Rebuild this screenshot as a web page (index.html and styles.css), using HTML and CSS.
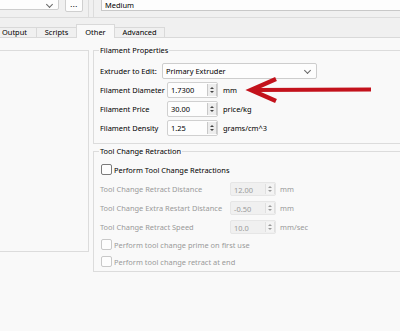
FILE: index.html
```html
<!DOCTYPE html>
<html lang="en">
<head>
<meta charset="UTF-8">
<title>Other settings</title>
<link rel="stylesheet" href="styles.css">
</head>
<body>

<div class="top">
    <div class="top-left">
        <div class="combo top-combo"><span class="chev"></span></div>
        <div class="dots">...</div>
    </div>
    <div class="top-right">
        <div class="line-edit">Medium</div>
    </div>
</div>

<div class="tabbar">
    <div class="tab first">Output</div>
    <div class="tab">Scripts</div>
    <div class="tab active">Other</div>
    <div class="tab">Advanced</div>
</div>

<div class="content">
    <div class="side-box"></div>

    <div class="groups">
        <div class="group filament">
            <div class="group-title">Filament Properties</div>
            <div class="row">
                <span class="label">Extruder to Edit:</span>
                <div class="combo extruder">Primary Extruder<span class="chev"></span></div>
            </div>
            <div class="row">
                <span class="label">Filament Diameter</span>
                <div class="spin"><span class="value">1.7300</span><span class="spin-btn"><i class="up"></i><i class="down"></i></span></div>
                <span class="unit">mm</span>
            </div>
            <div class="row">
                <span class="label">Filament Price</span>
                <div class="spin"><span class="value">30.00</span><span class="spin-btn"><i class="up"></i><i class="down"></i></span></div>
                <span class="unit">price/kg</span>
            </div>
            <div class="row">
                <span class="label">Filament Density</span>
                <div class="spin"><span class="value">1.25</span><span class="spin-btn"><i class="up"></i><i class="down"></i></span></div>
                <span class="unit">grams/cm^3</span>
            </div>
        </div>

        <div class="group tool">
            <div class="group-title">Tool Change Retraction</div>
            <div class="row">
                <span class="check"></span><span class="check-label">Perform Tool Change Retractions</span>
            </div>
            <div class="row disabled">
                <span class="label">Tool Change Retract Distance</span>
                <div class="spin"><span class="value">12.00</span><span class="spin-btn"><i class="up"></i><i class="down"></i></span></div>
                <span class="unit">mm</span>
            </div>
            <div class="row disabled">
                <span class="label">Tool Change Extra Restart Distance</span>
                <div class="spin"><span class="value">-0.50</span><span class="spin-btn"><i class="up"></i><i class="down"></i></span></div>
                <span class="unit">mm</span>
            </div>
            <div class="row disabled">
                <span class="label">Tool Change Retract Speed</span>
                <div class="spin"><span class="value">10.0</span><span class="spin-btn"><i class="up"></i><i class="down"></i></span></div>
                <span class="unit">mm/sec</span>
            </div>
            <div class="row short disabled">
                <span class="check"></span><span class="check-label">Perform tool change prime on first use</span>
            </div>
            <div class="row short disabled">
                <span class="check"></span><span class="check-label">Perform tool change retract at end</span>
            </div>
        </div>
    </div>
</div>

<!-- red arrow pointing at the diameter field -->
<svg class="arrow" width="132" height="32" viewBox="0 0 132 32">
    <path d="M7 16 L126 15.5" stroke="#c3121c" stroke-width="4" fill="none"/>
    <path d="M31 5 L6 16 L31 27" stroke="#c3121c" stroke-width="4.5" fill="none" stroke-linejoin="miter"/>
</svg>

</body>
</html>
```

FILE: styles.css
```css
body {
    margin: 0;
    background-color: #f0f0f0;
    font-family: "Noto Sans", "Open Sans", sans-serif;
    font-size: 7.45px;
    color: #000;
    height: 331px;
    overflow: hidden;
    position: relative;
}
.top {
    display: flex;
    height: 17px;
    border-bottom: 1px solid #dcdcdc;
}
.top-left {
    width: 88px;
    display: flex;
    border-right: 1px solid #dcdcdc;
    flex-shrink: 0;
}
.top-combo {
    width: 70px;
    margin-left: -11px;
    height: 15px;
    margin-top: -5px;
}
.dots {
    margin-left: 6px;
    width: 16px;
    height: 15px;
    margin-top: -5px;
    background-color: #fdfdfd;
    border: 1px solid #cfcfcf;
    border-radius: 2px;
    text-align: center;
    line-height: 16px;
    letter-spacing: 0.5px;
}
.top-right {
    flex: 1;
    margin-left: 4px;
    border-left: 1px solid #dcdcdc;
    padding-left: 7px;
}
.line-edit {
    height: 14px;
    margin-top: -5px;
    margin-right: -10px;
    background-color: #fdfdfd;
    border: 1px solid #c8c8c8;
    padding-left: 3px;
    line-height: 18px;
}
.combo {
    position: relative;
    box-sizing: border-box;
    background-color: #fdfdfd;
    border: 1px solid #cdcdcd;
    border-radius: 2px;
}
.chev {
    position: absolute;
    right: 6px;
    top: 50%;
    width: 4px;
    height: 4px;
    margin-top: -3px;
    border-right: 1px solid #666;
    border-bottom: 1px solid #666;
    transform: rotate(45deg);
}
.top-combo .chev {
    margin-top: -1px;
}

.tabbar {
    display: flex;
    align-items: flex-end;
    height: 19px;
    border-bottom: 1px solid #d9d9d9;
}
.tab {
    box-sizing: border-box;
    height: 10px;
    line-height: 9px;
    text-align: center;
    border-top: 1px solid #d9d9d9;
    border-right: 1px solid #d9d9d9;
    background-color: #f0f0f0;
}
.tab:nth-child(1) { width: 44px; margin-left: -7px; }
.tab:nth-child(2) { width: 40px; }
.tab:nth-child(3) { width: 39px; }
.tab:nth-child(4) { width: 50px; }
.tab.active {
    height: 14px;
    margin-bottom: -1px;
    padding-top: 2px;
    line-height: 10px;
    background-color: #f9f9f9;
    border-left: 1px solid #d9d9d9;
    margin-left: -1px;
}

.content {
    display: flex;
    align-items: flex-start;
    background-color: #f9f9f9;
    height: 293px;
}
.side-box {
    box-sizing: border-box;
    width: 90px;
    height: 202px;
    margin-left: -1px;
    margin-top: 12px;
    border: 1px solid #dcdcdc;
    flex-shrink: 0;
}
.groups {
    flex: 1;
    margin-left: 4px;
    margin-right: -10px;
    margin-top: 12px;
}
.group {
    border: 1px solid #dcdcdc;
    padding-left: 6px;
}
.group-title {
    width: fit-content;
    height: 11px;
    line-height: 11px;
    margin-top: -6px;
    margin-left: -1px;
    padding: 0 1px;
    background-color: #f9f9f9;
}
.filament {
    padding-bottom: 6px;
}
.filament .group-title {
    margin-bottom: 5px;
}
.tool {
    margin-top: 7px;
    padding-bottom: 1px;
}
.tool .group-title {
    margin-bottom: 3px;
}
.row {
    display: flex;
    align-items: center;
    height: 19px;
    white-space: nowrap;
}
.row.short {
    height: 17px;
}
.label {
    flex-shrink: 0;
}
.filament .label {
    width: 62px;
}
.tool .label {
    width: 130px;
}
.extruder {
    width: 155px;
    height: 16px;
    line-height: 14px;
    padding-left: 3px;
}
.spin {
    box-sizing: border-box;
    display: flex;
    justify-content: space-between;
    width: 51px;
    height: 16px;
    background-color: #fdfdfd;
    border: 1px solid #d0d0d0;
    border-radius: 2px;
}
.filament .spin {
    margin-left: 5px;
}
.value {
    line-height: 14px;
    padding-left: 3px;
}
.spin-btn {
    box-sizing: border-box;
    display: flex;
    flex-direction: column;
    justify-content: center;
    align-items: center;
    gap: 2px;
    width: 10px;
    margin: 1px 0 1px 0;
    border-left: 1px solid #c8c8c8;
    border-right: 1px solid #c8c8c8;
    background-color: #ededed;
}
.spin-btn i {
    width: 0;
    height: 0;
    border-left: 2px solid transparent;
    border-right: 2px solid transparent;
}
.spin-btn .up {
    border-bottom: 2px solid #444;
}
.spin-btn .down {
    border-top: 2px solid #444;
}
.unit {
    margin-left: 5px;
}
.tool .spin {
    width: 46px;
    height: 14px;
    background-color: #f0f0f0;
    border-color: #e6e6e6;
}
.tool .unit {
    margin-left: 4px;
}
.check {
    box-sizing: border-box;
    width: 11px;
    height: 11px;
    margin-left: 1px;
    margin-right: 2px;
    border: 1px solid #7a7a7a;
    border-radius: 2px;
    background-color: #fdfdfd;
}
.disabled {
    color: #9a9a9a;
}
.disabled .check {
    border-color: #c8c8c8;
}
.disabled .spin-btn .up {
    border-bottom-color: #999;
}
.disabled .spin-btn .down {
    border-top-color: #999;
}
.disabled .spin-btn {
    background-color: #f4f4f4;
    border-color: #e0e0e0;
}

.arrow {
    position: absolute;
    left: 245px;
    top: 74px;
}
```
